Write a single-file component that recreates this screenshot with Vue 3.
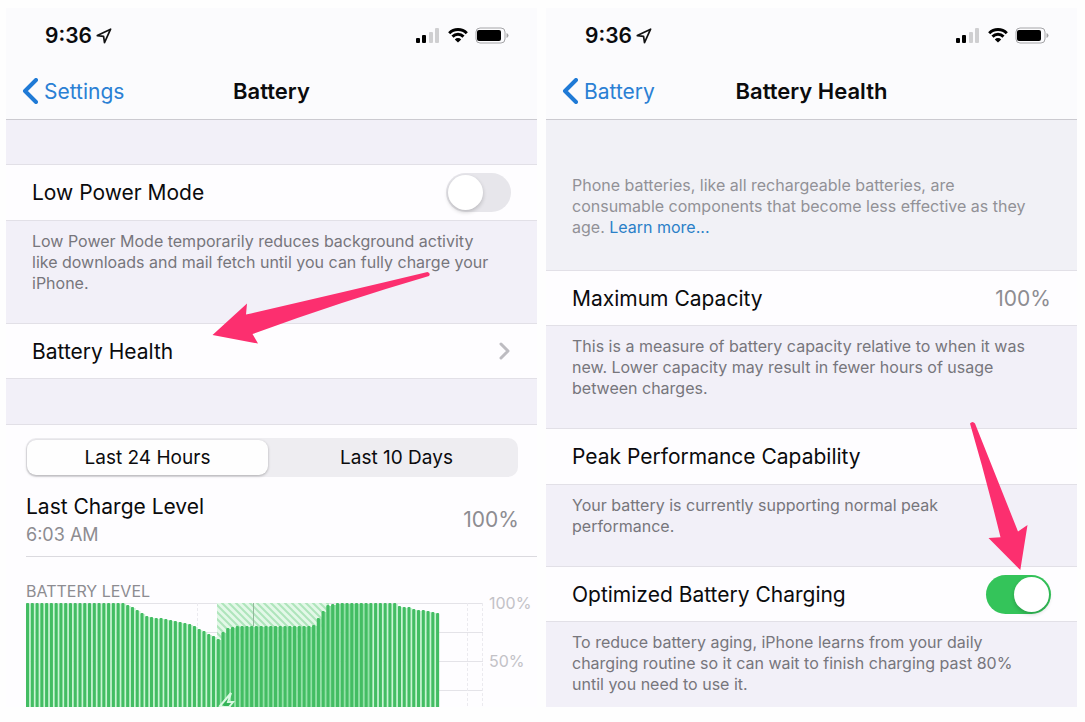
<script setup>
import { ref } from 'vue'

const lowPower = ref(false)
const optimized = ref(true)
const range = ref('24h')

const signalBars = [
  { x: 0, height: 5, on: true },
  { x: 6, height: 8, on: true },
  { x: 13, height: 11, on: false },
  { x: 19, height: 15, on: false },
]

// Distance of each bar's top edge from the 100% line, one bar per quarter hour
const drops = [
  ...Array(20).fill(0),
  0, 2, 4, 7, 10, 13, 14, 15, 15, 16, 17, 18, 19, 20, 21, 23, 26, 28, 31, 33, 36,
  29, 25, 24, 23,
  ...Array(15).fill(23),
  22, 15, 8, 2, 1,
  ...Array(13).fill(0),
  3, 4, 4, 6, 7, 7, 8, 9, 10,
]
const pitch = 4.768
const bars = drops.map((y, i) => ({
  x: i * pitch,
  y,
  height: 104 - y,
  gap: i < drops.length - 1 ? pitch : 3,
  charging: i >= 40 && i < 72,
}))
const gridY = [0, 29, 58, 87]
</script>

<template>
  <main class="page">
    <section class="phone">
      <header class="head">
        <div class="status">
          <span class="time">9:36</span>
          <svg class="locate" width="16" height="16" viewBox="0 0 16 16"><path d="M1.3 7.6 14.6 1.2 8.5 14.6 7.6 8.4Z" /></svg>
          <div class="indicators">
            <svg width="25" height="16" viewBox="0 0 25 16">
              <rect v-for="b in signalBars" :key="b.x" :class="b.on ? 'sig-on' : 'sig-off'" :x="b.x" :y="15 - b.height" width="4" :height="b.height" rx="1" />
            </svg>
            <svg width="20" height="15" viewBox="0 0 20 15">
              <path class="wave" d="M1.2 5.2a12.5 12.5 0 0 1 17.6 0M4.5 8.6a7.8 7.8 0 0 1 11 0" />
              <path d="M10 14.6 6.8 11.4a4.6 4.6 0 0 1 6.4 0Z" />
            </svg>
            <svg width="34" height="17" viewBox="0 0 34 17">
              <rect class="shell" x="1" y="1" width="29" height="15" rx="4" />
              <rect x="2" y="3" width="24" height="11" rx="2" />
              <path class="nub" d="M31.5 6v5q2-.8 2-2.500t-2-2.500Z" />
            </svg>
          </div>
        </div>
        <nav class="bar">
          <a class="back" href="#settings"><svg width="16" height="26" viewBox="0 0 16 26"><path d="M14 2 3 13 14 24" /></svg>Settings</a>
          <h1>Battery</h1>
        </nav>
      </header>

      <div class="spacer first"></div>
      <div class="row tall">
        <label for="low-power">Low Power Mode</label>
        <input id="low-power" v-model="lowPower" class="switch" type="checkbox" role="switch" />
      </div>
      <p class="note">Low Power Mode temporarily reduces background activity<br />like downloads and mail fetch until you can fully charge your<br />iPhone.</p>
      <a class="row" href="#battery-health">
        <span>Battery Health</span>
        <svg class="chevron" width="12" height="18" viewBox="0 0 12 18"><path d="M2 2 9 9 2 16" /></svg>
      </a>
      <div class="spacer"></div>

      <div class="usage">
        <div class="segments">
          <button type="button" :class="{ active: range === '24h' }" @click="range = '24h'">Last 24 Hours</button>
          <button type="button" :class="{ active: range === '10d' }" @click="range = '10d'">Last 10 Days</button>
        </div>
        <div class="charge">
          <div>
            <div class="charge-title">Last Charge Level</div>
            <div class="charge-time">6:03 AM</div>
          </div>
          <span class="value">100%</span>
        </div>
        <h2>BATTERY LEVEL</h2>
        <div class="chart">
          <svg class="plot" height="104" viewBox="0 0 457 104" preserveAspectRatio="none">
            <defs>
              <pattern id="hatch" width="7" height="7" patternUnits="userSpaceOnUse">
                <rect class="hatch-base" width="7" height="7" />
                <path class="hatch-line" d="M-2 -2 9 9M-2 5 2 9M5 -2 9 2" />
              </pattern>
            </defs>
            <line v-for="y in gridY" :key="y" class="grid" x1="0" :y1="y + .5" x2="457" :y2="y + .5" />
            <path class="grid dash" d="M171.500 0V104M342.500 0V104M441.500 0V104M456.500 0V104" />
            <path fill="url(#hatch)" d="M191 0H303V8L290 37H191Z" />
            <path class="mark" d="M227.500 0V23" />
            <rect v-for="b in bars" :key="'g' + b.x" :class="b.charging ? 'charging' : 'bar-gap'" :x="b.x" :y="b.y + 1" :width="b.gap" :height="b.height" />
            <rect v-for="b in bars" :key="b.x" class="bar-fill" :x="b.x" :y="b.y" width="3.100" :height="b.height + 2" rx="1" />
            <path class="bolt" d="M205 90 194 103 198 104H203L207 99H202Z" />
          </svg>
          <div class="scale"><span>100%</span><span>50%</span></div>
        </div>
      </div>
      <svg class="arrow to-health" width="220" height="74" viewBox="212 271 220 74"><path d="M212.500 335 247 303.500 246 314.500Q340 293 427.500 272Q431 273.500 429 276Q340 302 252.500 334L258 343.500Z" /></svg>
    </section>

    <section class="phone">
      <header class="head">
        <div class="status">
          <span class="time">9:36</span>
          <svg class="locate" width="16" height="16" viewBox="0 0 16 16"><path d="M1.3 7.6 14.6 1.2 8.5 14.6 7.6 8.4Z" /></svg>
          <div class="indicators">
            <svg width="25" height="16" viewBox="0 0 25 16">
              <rect v-for="b in signalBars" :key="b.x" :class="b.on ? 'sig-on' : 'sig-off'" :x="b.x" :y="15 - b.height" width="4" :height="b.height" rx="1" />
            </svg>
            <svg width="20" height="15" viewBox="0 0 20 15">
              <path class="wave" d="M1.2 5.2a12.5 12.5 0 0 1 17.6 0M4.5 8.6a7.8 7.8 0 0 1 11 0" />
              <path d="M10 14.6 6.8 11.4a4.6 4.6 0 0 1 6.4 0Z" />
            </svg>
            <svg width="34" height="17" viewBox="0 0 34 17">
              <rect class="shell" x="1" y="1" width="29" height="15" rx="4" />
              <rect x="2" y="3" width="24" height="11" rx="2" />
              <path class="nub" d="M31.5 6v5q2-.8 2-2.500t-2-2.500Z" />
            </svg>
          </div>
        </div>
        <nav class="bar">
          <a class="back" href="#battery"><svg width="16" height="26" viewBox="0 0 16 26"><path d="M14 2 3 13 14 24" /></svg>Battery</a>
          <h1>Battery Health</h1>
        </nav>
      </header>

      <p class="note intro">Phone batteries, like all rechargeable batteries, are<br />consumable components that become less effective as they<br />age. <a href="#learn-more">Learn more...</a></p>
      <div class="row">
        <span>Maximum Capacity</span>
        <span class="value">100%</span>
      </div>
      <p class="note">This is a measure of battery capacity relative to when it was<br />new. Lower capacity may result in fewer hours of usage<br />between charges.</p>
      <div class="row tall">
        <span>Peak Performance Capability</span>
      </div>
      <p class="note">Your battery is currently supporting normal peak<br />performance.</p>
      <div class="row">
        <label for="optimized">Optimized Battery Charging</label>
        <input id="optimized" v-model="optimized" class="switch" type="checkbox" role="switch" />
      </div>
      <p class="note last">To reduce battery aging, iPhone learns from your daily<br />charging routine so it can wait to finish charging past 80%<br />until you need to use it.</p>
      <svg class="arrow to-switch" width="60" height="152" viewBox="969 420 60 152"><path d="M1020.300 570 1027.500 525 1018 531.500 975 423.500Q972.500 420.500 970 423.500Q986 478 1000.500 537.300L988.500 538Z" /></svg>
    </section>
  </main>
</template>

<style>
body {
  margin: 0;
  background: #fefefe;
}
</style>

<style scoped>
.page {
  display: grid;
  grid-template-columns: 1fr 1fr;
  gap: 9px;
  padding: 8px 8px 15px 6px;
  font-family: Inter, "Liberation Sans", sans-serif;
  color: #0b0b0d;
}
.phone {
  position: relative;
  background: #f2f0f8;
}
.head {
  background: #fbfbfd;
  border-bottom: 1px solid #cbcad0;
}
.status {
  display: flex;
  align-items: center;
  height: 55px;
  padding: 0 28px 0 39px;
}
.time {
  font-size: 21px;
  font-weight: 600;
  line-height: 24px;
}
.locate {
  margin-left: 4px;
  fill: none;
  stroke: #111;
  stroke-width: 1.7;
  stroke-linejoin: round;
}
.indicators {
  display: flex;
  align-items: center;
  gap: 7px;
  margin-left: auto;
}
.sig-off {
  fill: #cfcfd1;
}
.wave {
  fill: none;
  stroke: #000;
  stroke-width: 3;
}
.shell {
  fill: none;
  stroke: #a5a5a8;
  stroke-width: 1;
}
.nub {
  fill: #a5a5a8;
}
.bar {
  display: grid;
  grid-template-columns: 1fr auto 1fr;
  align-items: center;
  height: 56px;
  padding: 0 16px;
}
.back {
  display: flex;
  align-items: center;
  gap: 6px;
  font-size: 21px;
  color: #2a80d4;
  text-decoration: none;
}
.back path {
  fill: none;
  stroke: #1f7ad6;
  stroke-width: 4;
  stroke-linecap: round;
  stroke-linejoin: round;
}
h1 {
  margin: 0;
  font-size: 22px;
  font-weight: 600;
}
.spacer {
  height: 45px;
}
.spacer.first {
  height: 44px;
}
.row {
  display: flex;
  align-items: center;
  justify-content: space-between;
  box-sizing: border-box;
  height: 56px;
  padding: 0 26px;
  background: #fefdff;
  border-top: 1px solid #e2e0e7;
  border-bottom: 1px solid #e2e0e7;
  font-size: 21px;
  color: inherit;
  text-decoration: none;
}
.row.tall {
  height: 57px;
}
.chevron path {
  fill: none;
  stroke: #bdbcc1;
  stroke-width: 3;
  stroke-linecap: round;
  stroke-linejoin: round;
}
.value {
  font-size: 21px;
  color: #8d8c91;
}
.note {
  margin: 0;
  padding: 10px 26px 29px;
  font-size: 16px;
  line-height: 21px;
  color: #77767c;
  white-space: nowrap;
}
.note.intro {
  padding-top: 55px;
  padding-bottom: 32px;
  background: #f1f1f6;
  color: #929197;
}
.note.intro a {
  color: #2a80c8;
  text-decoration: none;
}
.note.last {
  padding-bottom: 12px;
}
.switch {
  appearance: none;
  display: flex;
  align-items: center;
  box-sizing: border-box;
  width: 65px;
  height: 39px;
  margin: 0;
  padding: 2px;
  border-radius: 20px;
  background: #e7e6eb;
}
.switch::before {
  content: "";
  width: 35px;
  height: 35px;
  border-radius: 50%;
  background: #fff;
  box-shadow: 0 2px 4px rgba(0, 0, 0, .2);
}
.switch:checked {
  justify-content: flex-end;
  background: #34c45a;
}
.usage {
  padding: 13px 0 0 20px;
  background: #fefdff;
  border-top: 1px solid #e2e0e7;
}
.segments {
  display: grid;
  grid-template-columns: 1fr 1fr;
  gap: 8px;
  margin-right: 19px;
  padding: 2px 1px;
  border-radius: 10px;
  background: #eeedf1;
}
.segments button {
  height: 35px;
  padding: 0;
  border: 0;
  border-radius: 9px;
  background: none;
  font: 19px Inter, "Liberation Sans", sans-serif;
  color: #0b0b0d;
}
.segments .active {
  background: #fefefe;
  box-shadow: 0 1px 3px rgba(0, 0, 0, .28);
}
.charge {
  display: flex;
  align-items: center;
  justify-content: space-between;
  box-sizing: border-box;
  height: 80px;
  padding-top: 6px;
  padding-right: 18px;
  border-bottom: 1px solid #dbdadf;
}
.charge-title {
  font-size: 21px;
  line-height: 30px;
}
.charge-time {
  font-size: 18px;
  line-height: 26px;
  color: #8d8c91;
}
h2 {
  margin: 24px 0 2px;
  font-size: 16px;
  font-weight: 400;
  line-height: 20px;
  color: #8d8c91;
}
.chart {
  display: grid;
  grid-template-columns: 1fr 54px;
  height: 104px;
}
.plot {
  display: block;
  width: 100%;
}
.scale {
  display: flex;
  flex-direction: column;
  gap: 38px;
  margin-top: -10px;
  padding-left: 6px;
  font-size: 16px;
  line-height: 20px;
  color: #c3c2c7;
}
.grid {
  fill: none;
  stroke: #e4e3e8;
}
.dash {
  stroke: #ebeaef;
  stroke-dasharray: 3 2;
}
.hatch-base {
  fill: #e3f8e8;
}
.hatch-line {
  stroke: #aee5bb;
  stroke-width: 2;
}
.mark {
  stroke: #93b79b;
}
.bar-gap {
  fill: #c9f5d4;
}
.charging {
  fill: #93e2a8;
}
.bar-fill {
  fill: #43bd63;
}
.bolt {
  fill: #34b458;
  stroke: #d9f8e1;
  stroke-width: 2;
}
.arrow {
  position: absolute;
  fill: #fc2f6f;
  pointer-events: none;
}
.to-health {
  top: 263px;
  left: 206px;
}
.to-switch {
  top: 412px;
  right: 48px;
}
</style>
